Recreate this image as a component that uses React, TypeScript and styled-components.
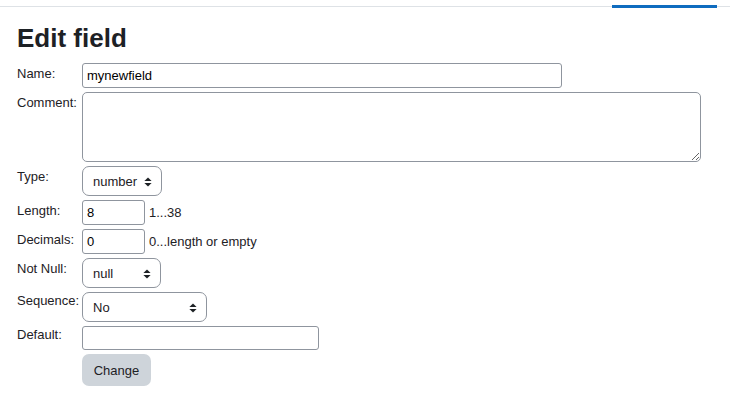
import React from "react";
import styled, { createGlobalStyle } from "styled-components";

const GlobalStyle = createGlobalStyle`
  html, body { margin: 0; padding: 0; background: #ffffff; }
  body {
    font-family: "Liberation Sans", Arial, sans-serif;
    color: #1d2125;
  }
  * { box-sizing: border-box; }
`;

const Page = styled.div`
  width: 730px;
  min-height: 412px;
  background: #ffffff;
`;

const TabBar = styled.nav`
  display: flex;
  justify-content: flex-end;
  height: 7px;
  padding-right: 13px;
  border-bottom: 1px solid #dee2e6;
`;

const ActiveTab = styled.div`
  align-self: flex-end;
  width: 105px;
  height: 3px;
  margin-bottom: -2px;
  background: #0f6cbf;
`;

const Content = styled.main`
  padding: 0 17px;
`;

const Title = styled.h2`
  margin: 16px 0 9px;
  font-size: 26px;
  line-height: 31px;
  font-weight: 700;
  color: #1d2125;
`;

const Form = styled.form`
  display: grid;
  grid-template-columns: 65px 1fr;
  row-gap: 4px;
  align-items: start;
`;

const Label = styled.label<{ $top?: number }>`
  font-size: 13px;
  line-height: 15px;
  padding-top: ${(p) => p.$top ?? 3}px;
  white-space: nowrap;
  color: #1d2125;
`;

const Field = styled.div`
  display: flex;
  align-items: center;
  gap: 4px;
  grid-column: 2;
`;

const TextInput = styled.input<{ $w: number; $h?: number }>`
  width: ${(p) => p.$w}px;
  height: ${(p) => p.$h ?? 25}px;
  padding: 0 4px;
  border: 1px solid #8f959e;
  border-radius: 3px;
  font-family: "Liberation Sans", Arial, sans-serif;
  font-size: 13px;
  color: #000;
  background: #fff;
  outline: none;
`;

const TextArea = styled.textarea`
  display: block;
  width: 619px;
  height: 70px;
  padding: 3px 4px;
  border: 1px solid #8f959e;
  border-radius: 5px;
  font-family: "Liberation Sans", Arial, sans-serif;
  font-size: 13px;
  background: #fff;
  outline: none;
`;

const SelectWrap = styled.div<{ $w: number }>`
  position: relative;
  width: ${(p) => p.$w}px;
  height: 30px;
`;

const NativeSelect = styled.select`
  appearance: none;
  -webkit-appearance: none;
  width: 100%;
  height: 100%;
  padding: 1px 22px 0 10px;
  border: 1px solid #8f959e;
  border-radius: 7px;
  background: #fff;
  font-family: "Liberation Sans", Arial, sans-serif;
  font-size: 13px;
  color: #1d2125;
  outline: none;
`;

const ArrowIcon = styled.svg`
  position: absolute;
  right: 10px;
  top: 50%;
  margin-top: -4px;
  width: 8px;
  height: 10px;
  pointer-events: none;
`;

const Hint = styled.span`
  font-size: 13px;
  color: #1d2125;
`;

const Button = styled.button`
  width: 69px;
  height: 32px;
  border: none;
  border-radius: 7px;
  background: #ced4da;
  color: #1d2125;
  font-family: "Liberation Sans", Arial, sans-serif;
  font-size: 13px;
  padding: 0;
`;

const Select: React.FC<{ w: number; value: string; options: string[] }> = ({ w, value, options }) => (
  <SelectWrap $w={w}>
    <NativeSelect defaultValue={value}>
      {options.map((o) => (
        <option key={o}>{o}</option>
      ))}
    </NativeSelect>
    <ArrowIcon viewBox="0 0 8 10">
      <path d="M4 0.5 L7.6 4 H0.4 Z" fill="#1d2125" />
      <path d="M0.4 6 H7.6 L4 9.5 Z" fill="#1d2125" />
    </ArrowIcon>
  </SelectWrap>
);

export default function App() {
  return (
    <Page>
      <GlobalStyle />
      <TabBar>
        <ActiveTab />
      </TabBar>
      <Content>
        <Title>Edit field</Title>
        <Form onSubmit={(e) => e.preventDefault()}>
          <Label>Name:</Label>
          <Field>
            <TextInput $w={480} defaultValue="mynewfield" />
          </Field>

          <Label>Comment:</Label>
          <Field>
            <TextArea />
          </Field>

          <Label>Type:</Label>
          <Field>
            <Select w={80} value="number" options={["int", "number", "float", "char", "text", "binary", "datetime"]} />
          </Field>

          <Label>Length:</Label>
          <Field>
            <TextInput $w={63} defaultValue="8" />
            <Hint>1...38</Hint>
          </Field>

          <Label>Decimals:</Label>
          <Field>
            <TextInput $w={63} defaultValue="0" />
            <Hint>0...length or empty</Hint>
          </Field>

          <Label>Not Null:</Label>
          <Field>
            <Select w={79} value="null" options={["not null", "null"]} />
          </Field>

          <Label $top={1}>Sequence:</Label>
          <Field>
            <Select w={125} value="No" options={["No", "Yes"]} />
          </Field>

          <Label $top={1}>Default:</Label>
          <Field>
            <TextInput $w={237} $h={24} defaultValue="" />
          </Field>

          <Field>
            <Button type="submit">Change</Button>
          </Field>
        </Form>
      </Content>
    </Page>
  );
}
